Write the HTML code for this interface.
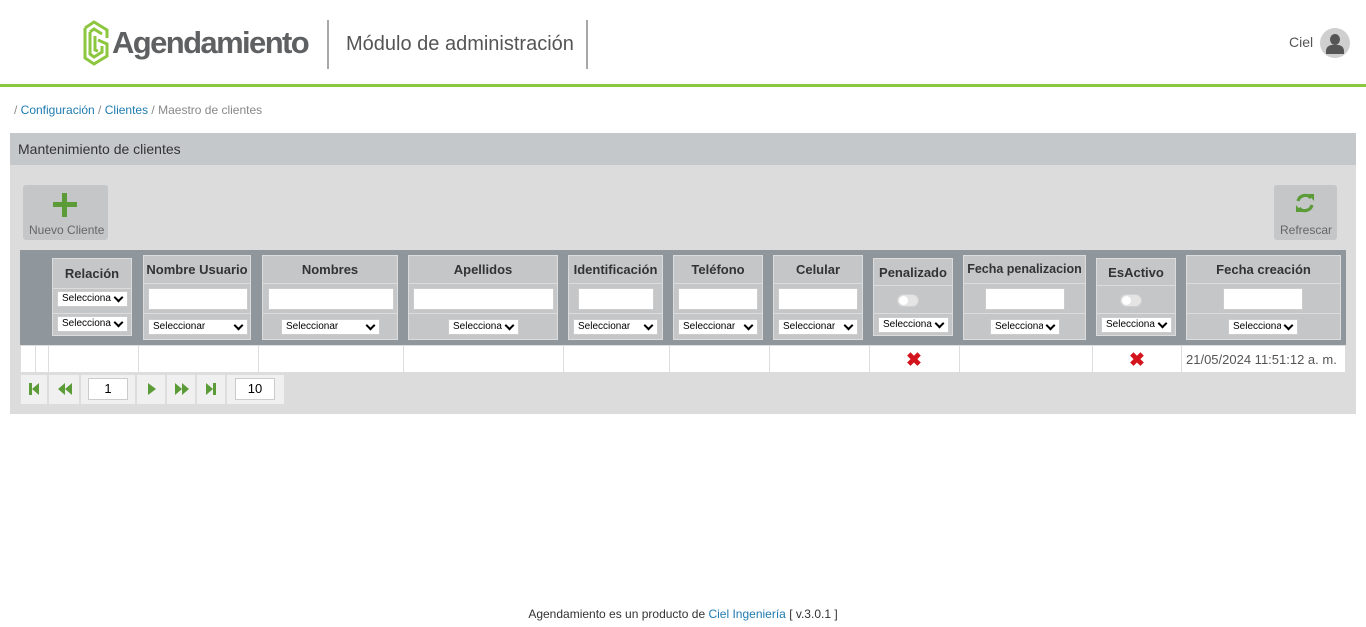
<!DOCTYPE html>
<html><head><meta charset="utf-8"><style>
*{box-sizing:border-box;margin:0;padding:0}
body{width:1366px;height:627px;background:#fff;font-family:"Liberation Sans",sans-serif;position:relative;overflow:hidden;color:#333}
.a{position:absolute}
.col{position:absolute;background:#c4c6c8;border:1px solid #dcdcdc}
.t{position:absolute;left:0;right:0;text-align:center;font-weight:bold;font-size:13px;color:#333;border-bottom:1px solid #dcdcdc;white-space:nowrap}
.r{position:absolute;left:0;right:0;border-bottom:1px solid #dcdcdc}
.in{position:absolute;background:#fff;border:1px solid #ccc}
.sel{position:absolute;background:#fff;border:1px solid #ccc;font-size:10px;height:16px;line-height:14px;padding-left:4px;overflow:hidden;white-space:nowrap;color:#000}
.sel:after{content:"";position:absolute;right:5px;top:2px;width:5px;height:5px;border-right:2px solid #000;border-bottom:2px solid #000;transform:rotate(45deg)}
.sel span{display:block;overflow:hidden;margin-right:16px}
.tg{position:absolute;width:22px;height:13px;border-radius:7px;background:#e4e4e4;border:1px solid #d0d0d0}
.tg:after{content:"";position:absolute;left:1px;top:1px;width:9px;height:9px;border-radius:50%;background:#fff}
.vl{position:absolute;top:345px;height:27px;width:1px;background:#ddd}
.pc{position:absolute;top:374px;height:31px;background:#f0f0f0;border:1px solid #ddd}
.x{position:absolute;top:349px;color:#d4141c;font-size:19px;font-weight:bold}
</style></head><body>
<!-- header -->
<svg class="a" style="left:82px;top:20px" width="28" height="46" viewBox="0 0 28 46">
<g fill="none" stroke="#8dc63f" stroke-width="3">
<path d="M3 8 L3 38 L12 44 L25 36 L25 24 L16 20"/>
<path d="M3 8 L12 2 L25 10 L25 18"/>
<path d="M8 12 L8 34 L12 37 L20 32 L20 26"/>
<path d="M8 12 L12 9 L20 14"/>
<path d="M13 16 L13 30 L16 31"/>
</g></svg>
<div class="a" style="left:112px;top:25px;font-size:31px;font-weight:bold;color:#5f6062;letter-spacing:-1.6px">Agendamiento</div>
<div class="a" style="left:327px;top:20px;width:2px;height:49px;background:#a8a8a8"></div>
<div class="a" style="left:346px;top:33px;font-size:20px;color:#555">Módulo de administración</div>
<div class="a" style="left:586px;top:20px;width:2px;height:49px;background:#a8a8a8"></div>
<div class="a" style="left:1289px;top:34px;font-size:14px;color:#555">Ciel</div>
<div class="a" style="left:1320px;top:28px;width:30px;height:30px;border-radius:50%;background:#cfcfcf;overflow:hidden">
<div class="a" style="left:10px;top:6px;width:10px;height:11px;border-radius:50%;background:#555"></div>
<div class="a" style="left:6px;top:17px;width:18px;height:9px;border-radius:6px 6px 0 0;background:#555"></div>
</div>
<div class="a" style="left:0;top:84px;width:1366px;height:3px;background:#8dc63f"></div>
<!-- breadcrumb -->
<div class="a" style="left:14px;top:103px;font-size:12px;color:#888">/ <span style="color:#1f7bb0">Configuración</span> / <span style="color:#1f7bb0">Clientes</span> / Maestro de clientes</div>
<!-- panel -->
<div class="a" style="left:10px;top:133px;width:1346px;height:32px;background:#c4c8ca"></div>
<div class="a" style="left:18px;top:141px;font-size:14px;color:#333">Mantenimiento de clientes</div>
<div class="a" style="left:10px;top:165px;width:1346px;height:249px;background:#dcdcdc"></div>
<!-- buttons -->
<div class="a" style="left:23px;top:185px;width:85px;height:55px;background:#c4c6c8;border-radius:3px"></div>
<div class="a" style="left:53px;top:202px;width:24px;height:5px;background:#5b9c38"></div>
<div class="a" style="left:62px;top:193px;width:5px;height:24px;background:#5b9c38"></div>
<div class="a" style="left:29px;top:223px;font-size:12px;color:#666">Nuevo Cliente</div>
<div class="a" style="left:1274px;top:185px;width:63px;height:55px;background:#c4c6c8;border-radius:3px"></div>
<svg class="a" style="left:1294px;top:192px" width="22" height="22" viewBox="0 0 22 22"><g fill="none" stroke="#5b9c38" stroke-width="3.2"><path d="M4 9 A7.5 7.5 0 0 1 17 6"/><path d="M18 13 A7.5 7.5 0 0 1 5 16"/></g><path d="M14 2 L20 2 L20 9 Z" fill="#5b9c38"/><path d="M8 20 L2 20 L2 13 Z" fill="#5b9c38"/></svg>
<div class="a" style="left:1280px;top:223px;font-size:12px;color:#666">Refrescar</div>
<!-- table header -->
<div class="a" style="left:20px;top:250px;width:1326px;height:95px;background:#8f969c"></div>

<div class="col" style="left:52px;top:258px;width:80px;height:78px">
<div class="t" style="top:0;height:30px;line-height:30px">Relación</div>
<div class="r" style="top:30px;height:25px"></div>
<div class="sel" style="left:4px;top:32px;width:71px"><span>Seleccionar</span></div>
<div class="sel" style="left:4px;top:57px;width:71px"><span>Seleccionar</span></div>
</div>

<div class="col" style="left:143px;top:255px;width:108px;height:85px"><div class="t" style="top:0;height:28px;line-height:27px">Nombre Usuario</div><div class="r" style="top:28px;height:30px"></div>
<div class="in" style="left:4px;top:32px;width:100px;height:22px"></div><div class="sel" style="left:4px;top:63px;width:100px"><span>Seleccionar</span></div></div>

<div class="col" style="left:262px;top:255px;width:136px;height:85px"><div class="t" style="top:0;height:28px;line-height:27px">Nombres</div><div class="r" style="top:28px;height:30px"></div>
<div class="in" style="left:5px;top:32px;width:126px;height:22px"></div><div class="sel" style="left:18px;top:63px;width:99px"><span>Seleccionar</span></div></div>

<div class="col" style="left:408px;top:255px;width:150px;height:85px"><div class="t" style="top:0;height:28px;line-height:27px">Apellidos</div><div class="r" style="top:28px;height:30px"></div>
<div class="in" style="left:4px;top:32px;width:141px;height:22px"></div><div class="sel" style="left:39px;top:63px;width:71px"><span>Seleccionar</span></div></div>

<div class="col" style="left:568px;top:255px;width:95px;height:85px"><div class="t" style="top:0;height:28px;line-height:27px">Identificación</div><div class="r" style="top:28px;height:30px"></div>
<div class="in" style="left:9px;top:32px;width:76px;height:22px"></div><div class="sel" style="left:4px;top:63px;width:85px"><span>Seleccionar</span></div></div>

<div class="col" style="left:673px;top:255px;width:90px;height:85px"><div class="t" style="top:0;height:28px;line-height:27px">Teléfono</div><div class="r" style="top:28px;height:30px"></div>
<div class="in" style="left:4px;top:32px;width:80px;height:22px"></div><div class="sel" style="left:4px;top:63px;width:80px"><span>Seleccionar</span></div></div>

<div class="col" style="left:773px;top:255px;width:90px;height:85px"><div class="t" style="top:0;height:28px;line-height:27px">Celular</div><div class="r" style="top:28px;height:30px"></div>
<div class="in" style="left:4px;top:32px;width:80px;height:22px"></div><div class="sel" style="left:4px;top:63px;width:80px"><span>Seleccionar</span></div></div>

<div class="col" style="left:873px;top:258px;width:80px;height:78px"><div class="t" style="top:0;height:27px;line-height:27px">Penalizado</div><div class="r" style="top:27px;height:28px"></div>
<div class="tg" style="left:23px;top:35px"></div><div class="sel" style="left:4px;top:58px;width:71px"><span>Seleccionar</span></div></div>

<div class="col" style="left:963px;top:255px;width:123px;height:85px"><div class="t" style="top:0;height:28px;line-height:27px;font-size:12.5px">Fecha penalizacion</div><div class="r" style="top:28px;height:30px"></div>
<div class="in" style="left:21px;top:32px;width:80px;height:22px"></div><div class="sel" style="left:26px;top:63px;width:70px"><span>Seleccionar</span></div></div>

<div class="col" style="left:1096px;top:258px;width:80px;height:78px"><div class="t" style="top:0;height:27px;line-height:27px">EsActivo</div><div class="r" style="top:27px;height:28px"></div>
<div class="tg" style="left:23px;top:35px"></div><div class="sel" style="left:4px;top:58px;width:71px"><span>Seleccionar</span></div></div>

<div class="col" style="left:1186px;top:255px;width:155px;height:85px"><div class="t" style="top:0;height:28px;line-height:27px">Fecha creación</div><div class="r" style="top:28px;height:30px"></div>
<div class="in" style="left:36px;top:32px;width:80px;height:22px"></div><div class="sel" style="left:41px;top:63px;width:70px"><span>Seleccionar</span></div></div>

<!-- data row -->
<div class="a" style="left:20px;top:345px;width:1326px;height:28px;background:#fff;border:1px solid #ddd"></div>
<div class="vl" style="left:35px"></div><div class="vl" style="left:48px"></div><div class="vl" style="left:138px"></div><div class="vl" style="left:258px"></div><div class="vl" style="left:403px"></div><div class="vl" style="left:563px"></div><div class="vl" style="left:669px"></div><div class="vl" style="left:769px"></div><div class="vl" style="left:869px"></div><div class="vl" style="left:959px"></div><div class="vl" style="left:1092px"></div><div class="vl" style="left:1181px"></div>
<div class="x" style="left:906px">✖</div>
<div class="x" style="left:1129px">✖</div>
<div class="a" style="left:1186px;top:352px;font-size:13px;color:#555">21/05/2024 11:51:12 a. m.</div>
<!-- pager -->
<div class="pc" style="left:20px;width:28px"></div><div class="pc" style="left:48px;width:32px"></div><div class="pc" style="left:80px;width:56px"></div><div class="pc" style="left:136px;width:30px"></div><div class="pc" style="left:166px;width:30px"></div><div class="pc" style="left:196px;width:30px"></div><div class="pc" style="left:226px;width:59px"></div>
<svg class="a" style="left:28px;top:382px" width="12" height="14"><rect x="1" y="1" width="3" height="12" fill="#5b9c38"/><path d="M11 1 L4 7 L11 13Z" fill="#5b9c38"/></svg>
<svg class="a" style="left:56px;top:382px" width="18" height="14"><path d="M9 1 L2 7 L9 13Z M16 1 L9 7 L16 13Z" fill="#5b9c38"/></svg>
<div class="in" style="left:88px;top:378px;width:40px;height:22px;font-size:13px;text-align:center;line-height:20px;color:#000">1</div>
<svg class="a" style="left:146px;top:382px" width="12" height="14"><path d="M2 1 L10 7 L2 13Z" fill="#5b9c38"/></svg>
<svg class="a" style="left:173px;top:382px" width="18" height="14"><path d="M2 1 L9 7 L2 13Z M9 1 L16 7 L9 13Z" fill="#5b9c38"/></svg>
<svg class="a" style="left:205px;top:382px" width="12" height="14"><path d="M1 1 L8 7 L1 13Z" fill="#5b9c38"/><rect x="8" y="1" width="3" height="12" fill="#5b9c38"/></svg>
<div class="in" style="left:235px;top:378px;width:40px;height:22px;font-size:13px;text-align:center;line-height:20px;color:#000">10</div>
<!-- footer -->
<div class="a" style="left:0;width:1366px;top:607px;text-align:center;font-size:12px;color:#333">Agendamiento es un producto de <span style="color:#1f7bb0">Ciel Ingeniería</span> [ v.3.0.1 ]</div>
</body></html>
